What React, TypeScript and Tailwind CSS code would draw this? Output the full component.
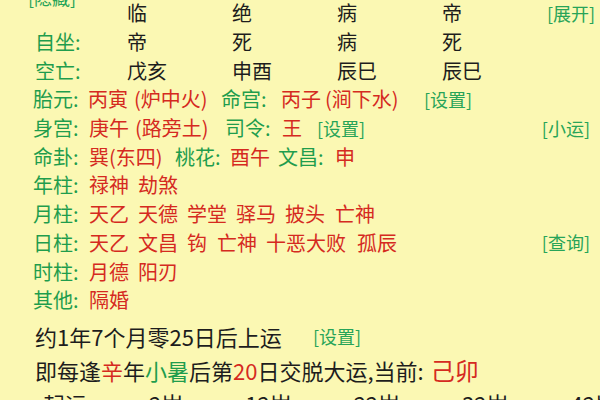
import React from 'react';

const green = 'text-[#1f9d4d]';
const red = 'text-[#d52a1f]';
const link = 'text-[18px] text-[#27a458]';

type Tok = { t: string; c: 'g' | 'r' | 'l'; w?: number };

const Seg: React.FC<{ tok: Tok }> = ({ tok }) => {
  const cls = tok.c === 'g' ? green : tok.c === 'r' ? red : link;
  return (
    <span className={`shrink-0 whitespace-nowrap ${cls}`} style={tok.w ? { width: tok.w } : undefined}>
      {tok.t}
    </span>
  );
};

const GridRow: React.FC<{ label?: React.ReactNode; cells: string[]; right?: string }> = ({ label, cells, right }) => (
  <div className="flex h-[28.7px] items-center">
    <div className={`ml-[2px] w-[92px] shrink-0 whitespace-nowrap ${green}`}>{label}</div>
    {cells.map((c, i) => (
      <div key={i} className="w-[105px] shrink-0 text-[#1d1d1d] last:w-[80px]">
        {c}
      </div>
    ))}
    {right && <div className={`ml-auto shrink-0 whitespace-nowrap ${link}`}>{right}</div>}
  </div>
);

const FreeRow: React.FC<{ toks: Tok[]; right?: string }> = ({ toks, right }) => (
  <div className="flex h-[28.7px] items-center">
    {toks.map((t, i) => (
      <Seg key={i} tok={t} />
    ))}
    {right && <div className={`ml-auto shrink-0 whitespace-nowrap ${link}`}>{right}</div>}
  </div>
);

const rows: { toks: Tok[]; right?: string }[] = [
  {
    toks: [
      { t: '胎元:', c: 'g', w: 55 },
      { t: '丙寅', c: 'r', w: 46 },
      { t: '(炉中火)', c: 'r', w: 87 },
      { t: '命宫:', c: 'g', w: 60 },
      { t: '丙子', c: 'r', w: 44 },
      { t: '(涧下水)', c: 'r', w: 99 },
      { t: '[设置]', c: 'l' },
    ],
  },
  {
    toks: [
      { t: '身宫:', c: 'g', w: 56 },
      { t: '庚午', c: 'r', w: 46 },
      { t: '(路旁土)', c: 'r', w: 90 },
      { t: '司令:', c: 'g', w: 57 },
      { t: '王', c: 'r', w: 35 },
      { t: '[设置]', c: 'l' },
    ],
    right: '[小运]',
  },
  {
    toks: [
      { t: '命卦:', c: 'g', w: 56 },
      { t: '巽(东四)', c: 'r', w: 86 },
      { t: '桃花:', c: 'g', w: 55 },
      { t: '酉午', c: 'r', w: 48 },
      { t: '文昌:', c: 'g', w: 57 },
      { t: '申', c: 'r' },
    ],
  },
  {
    toks: [
      { t: '年柱:', c: 'g', w: 56 },
      { t: '禄神', c: 'r', w: 49 },
      { t: '劫煞', c: 'r' },
    ],
  },
  {
    toks: [
      { t: '月柱:', c: 'g', w: 56 },
      { t: '天乙', c: 'r', w: 49 },
      { t: '天德', c: 'r', w: 49 },
      { t: '学堂', c: 'r', w: 49 },
      { t: '驿马', c: 'r', w: 49 },
      { t: '披头', c: 'r', w: 50 },
      { t: '亡神', c: 'r' },
    ],
  },
  {
    toks: [
      { t: '日柱:', c: 'g', w: 56 },
      { t: '天乙', c: 'r', w: 49 },
      { t: '文昌', c: 'r', w: 49 },
      { t: '钩', c: 'r', w: 30 },
      { t: '亡神', c: 'r', w: 49 },
      { t: '十恶大败', c: 'r', w: 91 },
      { t: '孤辰', c: 'r' },
    ],
    right: '[查询]',
  },
  {
    toks: [
      { t: '时柱:', c: 'g', w: 56 },
      { t: '月德', c: 'r', w: 49 },
      { t: '阳刃', c: 'r' },
    ],
  },
  {
    toks: [
      { t: '其他:', c: 'g', w: 56 },
      { t: '隔婚', c: 'r' },
    ],
  },
];

export default function App() {
  return (
    <div
      className="h-[400px] w-[600px] overflow-hidden bg-[#fbf8b3] pl-[33px] pr-[10px] text-[20px] text-[#1d1d1d]"
      style={{ fontFamily: '"Noto Sans CJK SC", "Noto Sans", sans-serif' }}
    >
      <div className="-mt-[1px]">
        <GridRow
          label={<span className={`inline-block -translate-x-[7px] -translate-y-[16px] ${link}`}>[隐藏]</span>}
          cells={['临', '绝', '病', '帝']}
          right="[展开]"
        />
        <GridRow label="自坐:" cells={['帝', '死', '病', '死']} />
        <GridRow label="空亡:" cells={['戊亥', '申酉', '辰巳', '辰巳']} />
        {rows.map((r, i) => (
          <FreeRow key={i} toks={r.toks} right={r.right} />
        ))}
      </div>

      <div className="mt-[5px] flex h-[34px] items-center text-[22px]">
        <span className="ml-[2px] w-[278px] shrink-0">约1年7个月零25日后上运</span>
        <span className={link}>[设置]</span>
      </div>
      <div className="ml-[2px] flex h-[33px] items-center whitespace-nowrap text-[22px]">
        <span>即每逢</span>
        <span className={red}>辛</span>
        <span>年</span>
        <span className={green}>小暑</span>
        <span>后第</span>
        <span className={red}>20</span>
        <span>日交脱大运,当前:</span>
        <span className={`ml-[7px] text-[24px] ${red}`}>己卯</span>
      </div>
      <div className="ml-[10px] flex h-[34px] items-center gap-[62px] whitespace-nowrap text-[22px]">
        <span>起运</span>
        <span>2岁</span>
        <span>12岁</span>
        <span>22岁</span>
        <span>32岁</span>
        <span>42岁</span>
      </div>
    </div>
  );
}
